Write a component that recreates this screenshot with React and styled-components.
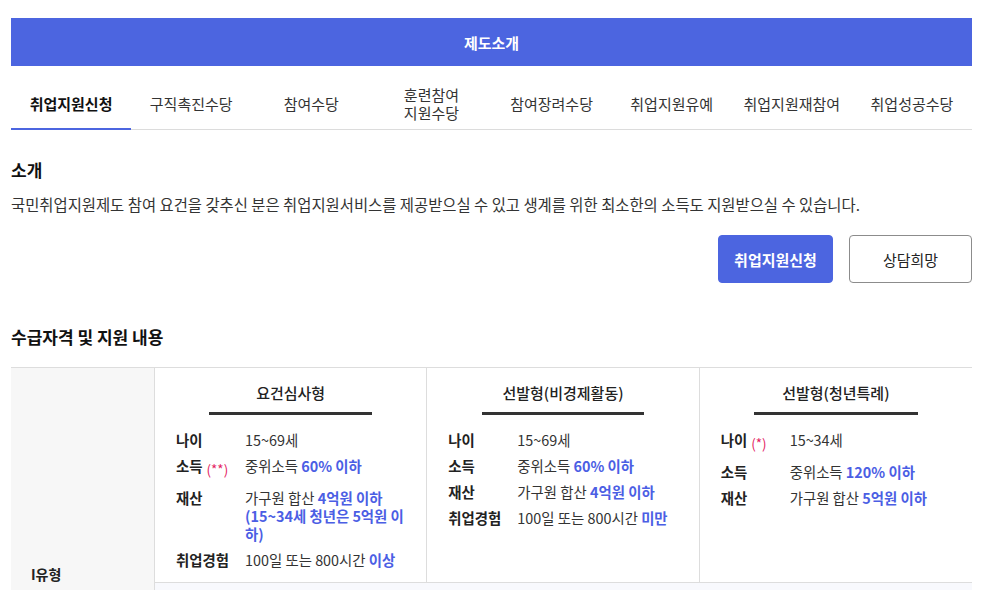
import styled, { createGlobalStyle } from 'styled-components';

const GlobalStyle = createGlobalStyle`
  html, body {
    margin: 0;
    padding: 0;
    overflow: hidden;
    background: #fff;
  }

  body {
    font-family: "Noto Sans CJK KR", "Noto Sans", sans-serif;
    color: #222;
  }

  * {
    box-sizing: border-box;
  }
`;

const BLUE = '#4c65e0';

const Page = styled.div`
  padding: 18px 12px 0 11px;
`;

const Banner = styled.h1`
  margin: 0;
  height: 48px;
  display: flex;
  align-items: center;
  justify-content: center;
  background: ${BLUE};
  color: #fff;
  font-size: 15px;
  font-weight: 700;
`;

const TabList = styled.ul`
  list-style: none;
  margin: 14px 0 0;
  padding: 0;
  display: grid;
  grid-template-columns: repeat(8, 1fr);
  border-bottom: 1px solid #dcdcdc;
`;

const Tab = styled.li`
  height: 50px;
  margin-bottom: -1px;
  display: flex;
  align-items: center;
  justify-content: center;
  text-align: center;
  font-size: 15px;
  line-height: 18px;
  color: ${(p) => (p.$active ? '#111' : '#333')};
  font-weight: ${(p) => (p.$active ? 700 : 400)};
  border-bottom: 2px solid ${(p) => (p.$active ? BLUE : 'transparent')};
  cursor: pointer;
`;

const SectionTitle = styled.h2`
  margin: ${(p) => p.$top} 0 0;
  font-size: 17px;
  line-height: 22px;
  font-weight: 700;
  color: #111;
`;

const Intro = styled.p`
  margin: 12px 0 0;
  font-size: 15.4px;
  line-height: 22px;
  color: #333;
`;

const ButtonRow = styled.div`
  margin-top: 20px;
  display: flex;
  justify-content: flex-end;
  gap: 16px;
`;

const Button = styled.button`
  height: 48px;
  width: ${(p) => (p.$primary ? '115px' : '123px')};
  border-radius: 4px;
  border: 1px solid ${(p) => (p.$primary ? BLUE : '#8c8c8c')};
  background: ${(p) => (p.$primary ? BLUE : '#fff')};
  color: ${(p) => (p.$primary ? '#fff' : '#222')};
  font-family: inherit;
  font-size: 15px;
  font-weight: ${(p) => (p.$primary ? 700 : 400)};
  cursor: pointer;
`;

const Table = styled.div`
  margin-top: 19px;
  display: grid;
  grid-template-columns: 144px repeat(3, 1fr);
  border-top: 1px solid #dddddd;
`;

const TypeCell = styled.div`
  grid-row: span 2;
  display: flex;
  align-items: center;
  padding-left: 20px;
  background: #f7f7f7;
  border-right: 1px solid #dddddd;
  font-size: 14px;
  font-weight: 700;
  color: #222;
`;

const PlanCell = styled.div`
  padding: 14px 0 13px;
  border-right: ${(p) => (p.$last ? 'none' : '1px solid #dddddd')};
`;

const PlanTitle = styled.h3`
  margin: 0;
  text-align: center;
  font-size: 15px;
  line-height: 22px;
  font-weight: 500;
  color: #222;
`;

const PlanBar = styled.div`
  width: 60%;
  height: 3px;
  margin: 8px auto 0;
  background: #333;
`;

const Specs = styled.dl`
  margin: 16px 0 0;
  padding: 0 12px 0 21px;
  display: grid;
  grid-template-columns: 69px 1fr;
  row-gap: 8px;
  font-size: 14.4px;
  line-height: 18px;

  dt {
    font-weight: 700;
    color: #222;
  }

  dd {
    margin: 0;
    color: #333;
  }
`;

const Mark = styled.span`
  display: inline-block;
  margin: 0 0 3px 4px;
  font-size: 13.5px;
  line-height: 18px;
  font-weight: 400;
  color: #e31c5f;
  vertical-align: -3px;
`;

const Hl = styled.span`
  color: #4b5ee4;
  font-weight: 600;
`;

const NextRow = styled.div`
  grid-column: 2 / span 3;
  min-height: 197px;
  background: #f8f9fd;
  border-top: 1px solid #dddddd;
`;

const tabs = [
  '취업지원신청',
  '구직촉진수당',
  '참여수당',
  ['훈련참여', '지원수당'],
  '참여장려수당',
  '취업지원유예',
  '취업지원재참여',
  '취업성공수당',
];

const plans = [
  {
    title: '요건심사형',
    rows: [
      { label: '나이', value: '15~69세' },
      { label: '소득', mark: '(**)', value: '중위소득 ', hl: '60% 이하' },
      { label: '재산', value: '가구원 합산 ', hl: '4억원 이하 (15~34세 청년은 5억원 이하)' },
      { label: '취업경험', value: '100일 또는 800시간 ', hl: '이상' },
    ],
  },
  {
    title: '선발형(비경제활동)',
    rows: [
      { label: '나이', value: '15~69세' },
      { label: '소득', value: '중위소득 ', hl: '60% 이하' },
      { label: '재산', value: '가구원 합산 ', hl: '4억원 이하' },
      { label: '취업경험', value: '100일 또는 800시간 ', hl: '미만' },
    ],
  },
  {
    title: '선발형(청년특례)',
    rows: [
      { label: '나이', mark: '(*)', value: '15~34세' },
      { label: '소득', value: '중위소득 ', hl: '120% 이하' },
      { label: '재산', value: '가구원 합산 ', hl: '5억원 이하' },
    ],
  },
];

const App = () => {
  return (
    <Page>
      <GlobalStyle />
      <Banner>제도소개</Banner>

      <TabList>
        {tabs.map((tab, i) => (
          <Tab key={i} $active={i === 0}>
            {Array.isArray(tab) ? (
              <span>
                {tab[0]}
                <br />
                {tab[1]}
              </span>
            ) : (
              tab
            )}
          </Tab>
        ))}
      </TabList>

      <SectionTitle $top="29px">소개</SectionTitle>
      <Intro>
        국민취업지원제도 참여 요건을 갖추신 분은 취업지원서비스를 제공받으실 수 있고 생계를 위한
        최소한의 소득도 지원받으실 수 있습니다.
      </Intro>
      <ButtonRow>
        <Button $primary>취업지원신청</Button>
        <Button>상담희망</Button>
      </ButtonRow>

      <SectionTitle $top="43px">수급자격 및 지원 내용</SectionTitle>
      <Table>
        <TypeCell>I유형</TypeCell>
        {plans.map((plan, i) => (
          <PlanCell key={plan.title} $last={i === plans.length - 1}>
            <PlanTitle>{plan.title}</PlanTitle>
            <PlanBar />
            <Specs>
              {plan.rows.map((row) => (
                <div key={row.label} style={{ display: 'contents' }}>
                  <dt>
                    {row.label}
                    {row.mark && <Mark>{row.mark}</Mark>}
                  </dt>
                  <dd>
                    {row.value}
                    {row.hl && <Hl>{row.hl}</Hl>}
                  </dd>
                </div>
              ))}
            </Specs>
          </PlanCell>
        ))}
        <NextRow />
      </Table>
    </Page>
  );
};

export default App;
